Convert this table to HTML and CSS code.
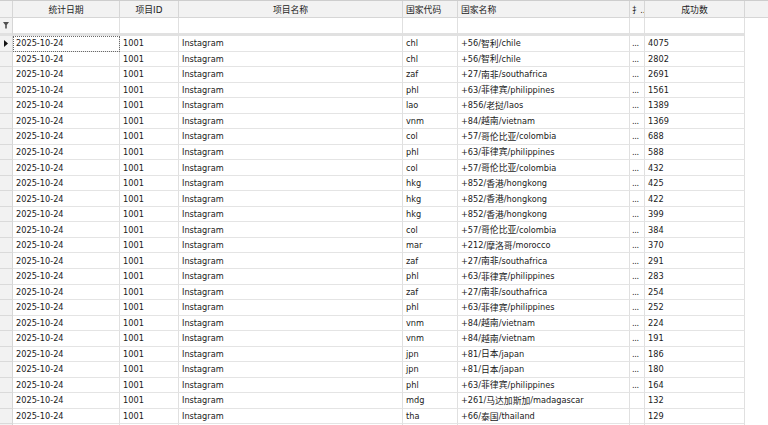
FILE: index.html
```html
<!DOCTYPE html>
<html>
<head>
<meta charset="utf-8">
<link rel="stylesheet" href="styles.css">
</head>
<body>
<div class="grid">
  <div class="row hdr">
    <div class="c ind"></div>
    <div class="c ctr">统计日期</div>
    <div class="c ctr">项目ID</div>
    <div class="c ctr">项目名称</div>
    <div class="c lft">国家代码</div>
    <div class="c lft">国家名称</div>
    <div class="c nar">扌..</div>
    <div class="c ctr">成功数</div>
    <div class="c fill"></div>
  </div>
  <div class="row flt">
    <div class="c ind"><svg class="funnel" width="6" height="7" viewBox="0 0 6 7"><polygon points="0,0 6,0 3.8,3 3.8,6.5 2.2,6.5 2.2,3" fill="#505050"/></svg></div>
    <div class="c"></div><div class="c"></div><div class="c"></div><div class="c"></div><div class="c"></div><div class="c"></div><div class="c"></div>
    <div class="c fill"></div>
  </div>
  <div class="row dat">
    <div class="c ind"><svg class="tri" width="4" height="7" viewBox="0 0 4 7"><polygon points="0,0 4,3.5 0,7" fill="#111"/></svg></div>
    <div class="c focus">2025-10-24</div><div class="c">1001</div><div class="c">Instagram</div><div class="c">chl</div><div class="c">+56/<span class="zh">智利</span>/chile</div><div class="c dots">...</div><div class="c">4075</div><div class="c fill"></div>
  </div>
  <div class="row dat"><div class="c ind"></div><div class="c">2025-10-24</div><div class="c">1001</div><div class="c">Instagram</div><div class="c">chl</div><div class="c">+56/<span class="zh">智利</span>/chile</div><div class="c dots">...</div><div class="c">2802</div><div class="c fill"></div></div>
  <div class="row dat"><div class="c ind"></div><div class="c">2025-10-24</div><div class="c">1001</div><div class="c">Instagram</div><div class="c">zaf</div><div class="c">+27/<span class="zh">南非</span>/southafrica</div><div class="c dots">...</div><div class="c">2691</div><div class="c fill"></div></div>
  <div class="row dat"><div class="c ind"></div><div class="c">2025-10-24</div><div class="c">1001</div><div class="c">Instagram</div><div class="c">phl</div><div class="c">+63/<span class="zh">菲律宾</span>/philippines</div><div class="c dots">...</div><div class="c">1561</div><div class="c fill"></div></div>
  <div class="row dat"><div class="c ind"></div><div class="c">2025-10-24</div><div class="c">1001</div><div class="c">Instagram</div><div class="c">lao</div><div class="c">+856/<span class="zh">老挝</span>/laos</div><div class="c dots">...</div><div class="c">1389</div><div class="c fill"></div></div>
  <div class="row dat"><div class="c ind"></div><div class="c">2025-10-24</div><div class="c">1001</div><div class="c">Instagram</div><div class="c">vnm</div><div class="c">+84/<span class="zh">越南</span>/vietnam</div><div class="c dots">...</div><div class="c">1369</div><div class="c fill"></div></div>
  <div class="row dat"><div class="c ind"></div><div class="c">2025-10-24</div><div class="c">1001</div><div class="c">Instagram</div><div class="c">col</div><div class="c">+57/<span class="zh">哥伦比亚</span>/colombia</div><div class="c dots">...</div><div class="c">688</div><div class="c fill"></div></div>
  <div class="row dat"><div class="c ind"></div><div class="c">2025-10-24</div><div class="c">1001</div><div class="c">Instagram</div><div class="c">phl</div><div class="c">+63/<span class="zh">菲律宾</span>/philippines</div><div class="c dots">...</div><div class="c">588</div><div class="c fill"></div></div>
  <div class="row dat"><div class="c ind"></div><div class="c">2025-10-24</div><div class="c">1001</div><div class="c">Instagram</div><div class="c">col</div><div class="c">+57/<span class="zh">哥伦比亚</span>/colombia</div><div class="c dots">...</div><div class="c">432</div><div class="c fill"></div></div>
  <div class="row dat"><div class="c ind"></div><div class="c">2025-10-24</div><div class="c">1001</div><div class="c">Instagram</div><div class="c">hkg</div><div class="c">+852/<span class="zh">香港</span>/hongkong</div><div class="c dots">...</div><div class="c">425</div><div class="c fill"></div></div>
  <div class="row dat"><div class="c ind"></div><div class="c">2025-10-24</div><div class="c">1001</div><div class="c">Instagram</div><div class="c">hkg</div><div class="c">+852/<span class="zh">香港</span>/hongkong</div><div class="c dots">...</div><div class="c">422</div><div class="c fill"></div></div>
  <div class="row dat"><div class="c ind"></div><div class="c">2025-10-24</div><div class="c">1001</div><div class="c">Instagram</div><div class="c">hkg</div><div class="c">+852/<span class="zh">香港</span>/hongkong</div><div class="c dots">...</div><div class="c">399</div><div class="c fill"></div></div>
  <div class="row dat"><div class="c ind"></div><div class="c">2025-10-24</div><div class="c">1001</div><div class="c">Instagram</div><div class="c">col</div><div class="c">+57/<span class="zh">哥伦比亚</span>/colombia</div><div class="c dots">...</div><div class="c">384</div><div class="c fill"></div></div>
  <div class="row dat"><div class="c ind"></div><div class="c">2025-10-24</div><div class="c">1001</div><div class="c">Instagram</div><div class="c">mar</div><div class="c">+212/<span class="zh">摩洛哥</span>/morocco</div><div class="c dots">...</div><div class="c">370</div><div class="c fill"></div></div>
  <div class="row dat"><div class="c ind"></div><div class="c">2025-10-24</div><div class="c">1001</div><div class="c">Instagram</div><div class="c">zaf</div><div class="c">+27/<span class="zh">南非</span>/southafrica</div><div class="c dots">...</div><div class="c">291</div><div class="c fill"></div></div>
  <div class="row dat"><div class="c ind"></div><div class="c">2025-10-24</div><div class="c">1001</div><div class="c">Instagram</div><div class="c">phl</div><div class="c">+63/<span class="zh">菲律宾</span>/philippines</div><div class="c dots">...</div><div class="c">283</div><div class="c fill"></div></div>
  <div class="row dat"><div class="c ind"></div><div class="c">2025-10-24</div><div class="c">1001</div><div class="c">Instagram</div><div class="c">zaf</div><div class="c">+27/<span class="zh">南非</span>/southafrica</div><div class="c dots">...</div><div class="c">254</div><div class="c fill"></div></div>
  <div class="row dat"><div class="c ind"></div><div class="c">2025-10-24</div><div class="c">1001</div><div class="c">Instagram</div><div class="c">phl</div><div class="c">+63/<span class="zh">菲律宾</span>/philippines</div><div class="c dots">...</div><div class="c">252</div><div class="c fill"></div></div>
  <div class="row dat"><div class="c ind"></div><div class="c">2025-10-24</div><div class="c">1001</div><div class="c">Instagram</div><div class="c">vnm</div><div class="c">+84/<span class="zh">越南</span>/vietnam</div><div class="c dots">...</div><div class="c">224</div><div class="c fill"></div></div>
  <div class="row dat"><div class="c ind"></div><div class="c">2025-10-24</div><div class="c">1001</div><div class="c">Instagram</div><div class="c">vnm</div><div class="c">+84/<span class="zh">越南</span>/vietnam</div><div class="c dots">...</div><div class="c">191</div><div class="c fill"></div></div>
  <div class="row dat"><div class="c ind"></div><div class="c">2025-10-24</div><div class="c">1001</div><div class="c">Instagram</div><div class="c">jpn</div><div class="c">+81/<span class="zh">日本</span>/japan</div><div class="c dots">...</div><div class="c">186</div><div class="c fill"></div></div>
  <div class="row dat"><div class="c ind"></div><div class="c">2025-10-24</div><div class="c">1001</div><div class="c">Instagram</div><div class="c">jpn</div><div class="c">+81/<span class="zh">日本</span>/japan</div><div class="c dots">...</div><div class="c">180</div><div class="c fill"></div></div>
  <div class="row dat"><div class="c ind"></div><div class="c">2025-10-24</div><div class="c">1001</div><div class="c">Instagram</div><div class="c">phl</div><div class="c">+63/<span class="zh">菲律宾</span>/philippines</div><div class="c dots">...</div><div class="c">164</div><div class="c fill"></div></div>
  <div class="row dat"><div class="c ind"></div><div class="c">2025-10-24</div><div class="c">1001</div><div class="c">Instagram</div><div class="c">mdg</div><div class="c">+261/<span class="zh">马达加斯加</span>/madagascar</div><div class="c dots"></div><div class="c">132</div><div class="c fill"></div></div>
  <div class="row dat"><div class="c ind"></div><div class="c">2025-10-24</div><div class="c">1001</div><div class="c">Instagram</div><div class="c">tha</div><div class="c">+66/<span class="zh">泰国</span>/thailand</div><div class="c dots"></div><div class="c">129</div><div class="c fill"></div></div>
  <div class="row dat"><div class="c ind"></div><div class="c"></div><div class="c"></div><div class="c"></div><div class="c"></div><div class="c"></div><div class="c dots"></div><div class="c"></div><div class="c fill"></div></div>
</div>
</body>
</html>
```
FILE: styles.css
```css
html, body {
  margin: 0;
  padding: 0;
  background: #ffffff;
  overflow: hidden;
}
body {
  font-family: "DejaVu Sans", "Noto Sans CJK SC", sans-serif;
  font-size: 8.2px;
  color: #1a1a1a;
}
.grid {
  width: 768px;
}
.row {
  display: grid;
  grid-template-columns: 13px 107px 59px 224px 55px 172px 15px 100px 23px;
}
.c {
  box-sizing: border-box;
  display: flex;
  align-items: center;
  padding-left: 3px;
  white-space: nowrap;
  overflow: hidden;
  border-right: 1px solid #e0e0e0;
}
.c.fill {
  border-right: none;
}
.zh {
  font-family: "Noto Sans CJK SC", sans-serif;
  font-size: 8.8px;
}

/* header */
.hdr {
  height: 18px;
  background: #f2f2f2;
  box-sizing: border-box;
  border-top: 1px solid #cdcdcd;
  border-bottom: 1px solid #d6d6d6;
  color: #222222;
  font-size: 8.8px;
}
.hdr .c {
  border-right-color: #d6d6d6;
}
.hdr .ctr {
  justify-content: center;
  padding-left: 0;
}
.hdr .nar {
  padding-left: 2px;
  font-size: 8.2px;
}

/* filter row */
.flt {
  height: 18px;
}
.flt .c {
  border-bottom: 3px solid #e1e1e1;
}
.flt .c.fill {
  border-bottom: none;
}

/* indicator column */
.ind {
  background: #f2f2f2;
  border-right-color: #d6d6d6 !important;
  justify-content: center;
  padding-left: 0;
}
.funnel {
  display: block;
}
.tri {
  display: block;
}

/* data rows */
.dat {
  height: 15.54px;
}
.dat .c {
  border-bottom: 1px solid #e4e4e4;
}
.dat .c.fill {
  border-bottom: none;
}
.dat .ind {
  border-bottom-color: #dadada;
}
.dots {
  padding-left: 2px;
  letter-spacing: -0.3px;
}
.focus {
  outline: 1px dotted #6a6a6a;
  outline-offset: -1px;
}
```
